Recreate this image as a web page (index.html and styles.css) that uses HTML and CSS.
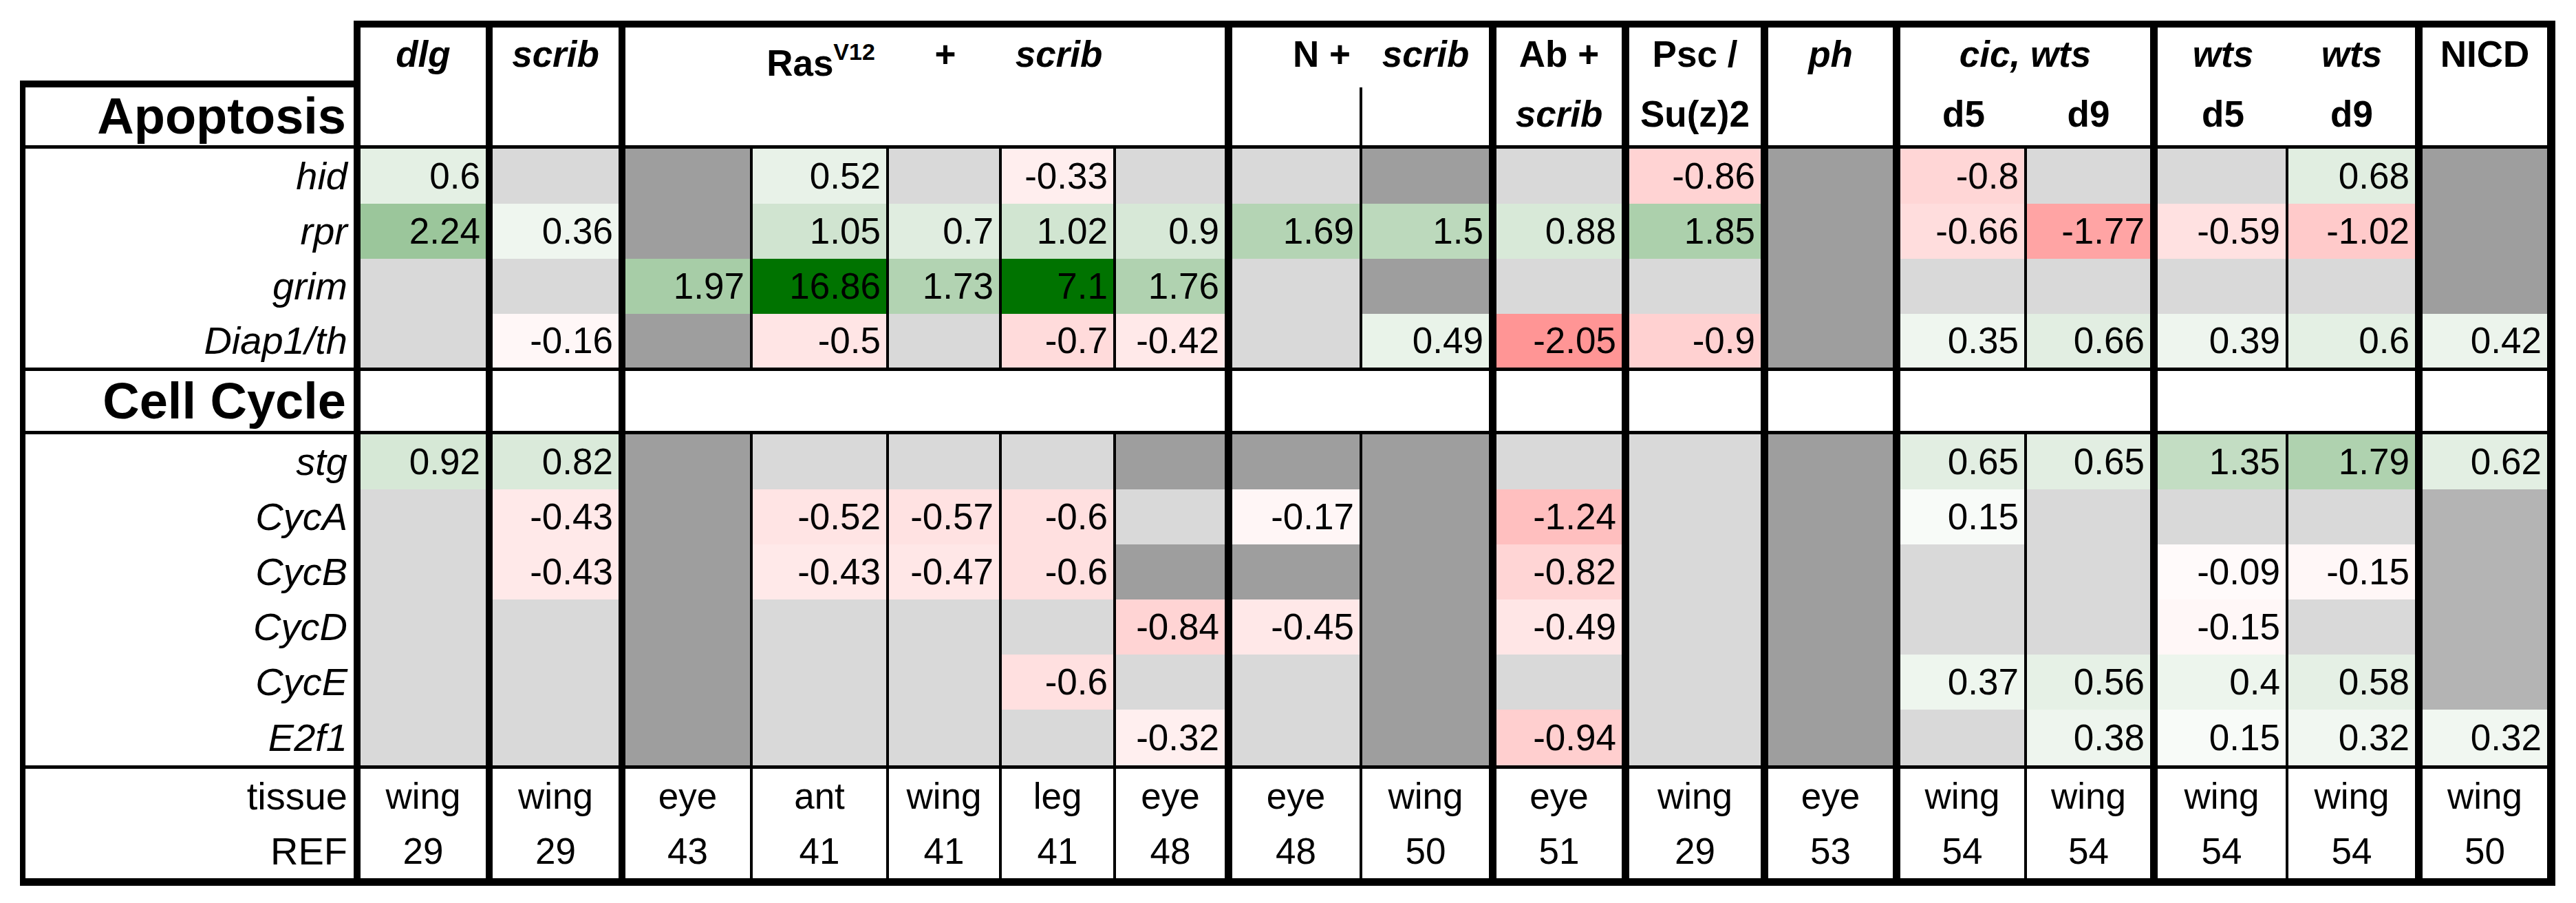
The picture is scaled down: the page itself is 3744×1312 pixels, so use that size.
FILE: index.html
```html
<!DOCTYPE html>
<html lang="en">
<head>
<meta charset="utf-8">
<title>Apoptosis and cell cycle gene expression</title>
<link rel="stylesheet" href="styles.css">
</head>
<body>
<table class="grid">
  <colgroup>
    <col class="c-label">
    <col class="c-dlg">
    <col class="c-scrib">
    <col class="c-r-eye">
    <col class="c-r-ant">
    <col class="c-r-wing">
    <col class="c-r-leg">
    <col class="c-r-eye2">
    <col class="c-n-eye">
    <col class="c-n-wing">
    <col class="c-ab">
    <col class="c-psc">
    <col class="c-ph">
    <col class="c-cic5">
    <col class="c-cic9">
    <col class="c-wts5">
    <col class="c-wts9">
    <col class="c-nicd">
  </colgroup>
  <thead>
    <tr class="h1">
      <th class="corner"></th>
      <th class="bi k10">dlg</th>
      <th class="bi k10">scrib</th>
      <th></th>
      <th class="ras">Ras<sup>V12</sup></th>
      <th>+</th>
      <th class="bi">scrib</th>
      <th class="k"></th>
      <th class="nplus">N +</th>
      <th class="bi k">scrib</th>
      <th class="k">Ab +</th>
      <th class="k">Psc /</th>
      <th class="bi k">ph</th>
      <th class="bi k" colspan="2">cic, wts</th>
      <th class="bi">wts</th>
      <th class="bi k">wts</th>
      <th class="out">NICD</th>
    </tr>
    <tr class="h2 sep">
      <th class="lab sect">Apoptosis</th>
      <th class="k10"></th>
      <th class="k10"></th>
      <th class="k" colspan="5"></th>
      <th class="n"></th>
      <th class="k"></th>
      <th class="bi k">scrib</th>
      <th class="k">Su(z)2</th>
      <th class="k"></th>
      <th>d5</th>
      <th class="k">d9</th>
      <th>d5</th>
      <th class="k">d9</th>
      <th class="out"></th>
    </tr>
  </thead>
  <tbody>
    <tr class="row">
      <th class="lab gene">hid</th>
      <td style="background:#e4f0e4">0.6</td>
      <td class="lg"></td>
      <td class="dg"></td>
      <td style="background:#e8f2e8">0.52</td>
      <td class="lg"></td>
      <td style="background:#ffeeee">-0.33</td>
      <td class="lg"></td>
      <td class="lg"></td>
      <td class="dg"></td>
      <td class="lg"></td>
      <td style="background:#ffd3d3">-0.86</td>
      <td class="dg"></td>
      <td style="background:#ffd6d6">-0.8</td>
      <td class="lg"></td>
      <td class="lg"></td>
      <td style="background:#e1eee1">0.68</td>
      <td class="dg"></td>
    </tr>
    <tr class="row">
      <th class="lab gene">rpr</th>
      <td style="background:#9bc69b">2.24</td>
      <td style="background:#eff6ef">0.36</td>
      <td class="dg"></td>
      <td style="background:#d0e4d0">1.05</td>
      <td style="background:#e0ede0">0.7</td>
      <td style="background:#d1e5d1">1.02</td>
      <td style="background:#d7e8d7">0.9</td>
      <td style="background:#b4d4b4">1.69</td>
      <td style="background:#bcd9bc">1.5</td>
      <td style="background:#d8e9d8">0.88</td>
      <td style="background:#acd0ac">1.85</td>
      <td class="dg"></td>
      <td style="background:#ffdddd">-0.66</td>
      <td style="background:#ffa4a4">-1.77</td>
      <td style="background:#ffe1e1">-0.59</td>
      <td style="background:#ffcaca">-1.02</td>
      <td class="dg"></td>
    </tr>
    <tr class="row">
      <th class="lab gene">grim</th>
      <td class="lg"></td>
      <td class="lg"></td>
      <td style="background:#a7cda7">1.97</td>
      <td style="background:#007300">16.86</td>
      <td style="background:#b2d3b2">1.73</td>
      <td style="background:#007300">7.1</td>
      <td style="background:#b0d2b0">1.76</td>
      <td class="lg"></td>
      <td class="dg"></td>
      <td class="lg"></td>
      <td class="lg"></td>
      <td class="dg"></td>
      <td class="lg"></td>
      <td class="lg"></td>
      <td class="lg"></td>
      <td class="lg"></td>
      <td class="dg"></td>
    </tr>
    <tr class="row sep diap">
      <th class="lab gene">Diap1/th</th>
      <td class="lg"></td>
      <td style="background:#fff7f7">-0.16</td>
      <td class="dg"></td>
      <td style="background:#ffe5e5">-0.5</td>
      <td class="lg"></td>
      <td style="background:#ffdbdb">-0.7</td>
      <td style="background:#ffe9e9">-0.42</td>
      <td class="lg"></td>
      <td style="background:#e9f3e9">0.49</td>
      <td style="background:#ff9595">-2.05</td>
      <td style="background:#ffd1d1">-0.9</td>
      <td class="dg"></td>
      <td style="background:#eff6ef">0.35</td>
      <td style="background:#e2eee2">0.66</td>
      <td style="background:#eef5ee">0.39</td>
      <td style="background:#e4f0e4">0.6</td>
      <td style="background:#ecf4ec">0.42</td>
    </tr>
    <tr class="cc sep">
      <th class="lab sect">Cell Cycle</th>
      <td class="k10"></td>
      <td class="k10"></td>
      <td class="k" colspan="5"></td>
      <td class="k" colspan="2"></td>
      <td class="k"></td>
      <td class="k"></td>
      <td class="k"></td>
      <td class="k" colspan="2"></td>
      <td class="k" colspan="2"></td>
      <td class="out"></td>
    </tr>
    <tr class="row">
      <th class="lab gene">stg</th>
      <td style="background:#d6e8d6">0.92</td>
      <td style="background:#daeada">0.82</td>
      <td class="dg"></td>
      <td class="lg"></td>
      <td class="lg"></td>
      <td class="lg"></td>
      <td class="dg"></td>
      <td class="dg"></td>
      <td class="dg"></td>
      <td class="lg"></td>
      <td class="lg"></td>
      <td class="dg"></td>
      <td style="background:#e2eee2">0.65</td>
      <td style="background:#e2eee2">0.65</td>
      <td style="background:#c3ddc3">1.35</td>
      <td style="background:#afd2af">1.79</td>
      <td style="background:#e3efe3">0.62</td>
    </tr>
    <tr class="row">
      <th class="lab gene">CycA</th>
      <td class="lg"></td>
      <td style="background:#ffe9e9">-0.43</td>
      <td class="dg"></td>
      <td style="background:#ffe4e4">-0.52</td>
      <td style="background:#ffe2e2">-0.57</td>
      <td style="background:#ffe0e0">-0.6</td>
      <td class="lg"></td>
      <td style="background:#fff6f6">-0.17</td>
      <td class="dg"></td>
      <td style="background:#ffbfbf">-1.24</td>
      <td class="lg"></td>
      <td class="dg"></td>
      <td style="background:#f8fbf8">0.15</td>
      <td class="lg"></td>
      <td class="lg"></td>
      <td class="lg"></td>
      <td class="mg"></td>
    </tr>
    <tr class="row">
      <th class="lab gene">CycB</th>
      <td class="lg"></td>
      <td style="background:#ffe9e9">-0.43</td>
      <td class="dg"></td>
      <td style="background:#ffe9e9">-0.43</td>
      <td style="background:#ffe7e7">-0.47</td>
      <td style="background:#ffe0e0">-0.6</td>
      <td class="dg"></td>
      <td class="dg"></td>
      <td class="dg"></td>
      <td style="background:#ffd5d5">-0.82</td>
      <td class="lg"></td>
      <td class="dg"></td>
      <td class="lg"></td>
      <td class="lg"></td>
      <td style="background:#fffafa">-0.09</td>
      <td style="background:#fff7f7">-0.15</td>
      <td class="mg"></td>
    </tr>
    <tr class="row">
      <th class="lab gene">CycD</th>
      <td class="lg"></td>
      <td class="lg"></td>
      <td class="dg"></td>
      <td class="lg"></td>
      <td class="lg"></td>
      <td class="lg"></td>
      <td style="background:#ffd4d4">-0.84</td>
      <td style="background:#ffe8e8">-0.45</td>
      <td class="dg"></td>
      <td style="background:#ffe6e6">-0.49</td>
      <td class="lg"></td>
      <td class="dg"></td>
      <td class="lg"></td>
      <td class="lg"></td>
      <td style="background:#fff7f7">-0.15</td>
      <td class="lg"></td>
      <td class="mg"></td>
    </tr>
    <tr class="row">
      <th class="lab gene">CycE</th>
      <td class="lg"></td>
      <td class="lg"></td>
      <td class="dg"></td>
      <td class="lg"></td>
      <td class="lg"></td>
      <td style="background:#ffe0e0">-0.6</td>
      <td class="lg"></td>
      <td class="lg"></td>
      <td class="dg"></td>
      <td class="lg"></td>
      <td class="lg"></td>
      <td class="dg"></td>
      <td style="background:#eef6ee">0.37</td>
      <td style="background:#e6f1e6">0.56</td>
      <td style="background:#edf5ed">0.4</td>
      <td style="background:#e5f0e5">0.58</td>
      <td class="mg"></td>
    </tr>
    <tr class="row sep e2f">
      <th class="lab gene">E2f1</th>
      <td class="lg"></td>
      <td class="lg"></td>
      <td class="dg"></td>
      <td class="lg"></td>
      <td class="lg"></td>
      <td class="lg"></td>
      <td style="background:#ffefef">-0.32</td>
      <td class="lg"></td>
      <td class="dg"></td>
      <td style="background:#ffcfcf">-0.94</td>
      <td class="lg"></td>
      <td class="dg"></td>
      <td class="lg"></td>
      <td style="background:#eef5ee">0.38</td>
      <td style="background:#f8fbf8">0.15</td>
      <td style="background:#f1f7f1">0.32</td>
      <td style="background:#f1f7f1">0.32</td>
    </tr>
    <tr class="row meta">
      <th class="lab">tissue</th>
      <td>wing</td>
      <td>wing</td>
      <td>eye</td>
      <td>ant</td>
      <td>wing</td>
      <td>leg</td>
      <td>eye</td>
      <td>eye</td>
      <td>wing</td>
      <td>eye</td>
      <td>wing</td>
      <td>eye</td>
      <td>wing</td>
      <td>wing</td>
      <td>wing</td>
      <td>wing</td>
      <td>wing</td>
    </tr>
    <tr class="row meta last">
      <th class="lab">REF</th>
      <td>29</td>
      <td>29</td>
      <td>43</td>
      <td>41</td>
      <td>41</td>
      <td>41</td>
      <td>48</td>
      <td>48</td>
      <td>50</td>
      <td>51</td>
      <td>29</td>
      <td>53</td>
      <td>54</td>
      <td>54</td>
      <td>54</td>
      <td>54</td>
      <td>50</td>
    </tr>
  </tbody>
</table>
</body>
</html>
```

FILE: styles.css
```css
html, body {
  margin: 0;
  padding: 0;
  background: #ffffff;
}

body {
  font-family: "Liberation Sans", Arial, Helvetica, sans-serif;
  color: #000000;
}

.grid {
  border-collapse: separate;
  border-spacing: 0;
  table-layout: fixed;
  width: 3685px;
  margin: 30px 0 0 29px;
}

.grid th,
.grid td {
  box-sizing: border-box;
  padding: 0 8px;
  font-size: 53px;
  line-height: 60px;
  font-weight: normal;
  font-style: normal;
  white-space: nowrap;
  vertical-align: middle;
  text-align: right;
}

/* column widths */
.c-label { width: 495px; }
.c-dlg { width: 192px; }
.c-scrib { width: 193px; }
.c-r-eye { width: 185px; }
.c-r-ant { width: 198px; }
.c-r-wing { width: 164px; }
.c-r-leg { width: 166px; }
.c-r-eye2 { width: 169px; }
.c-n-eye { width: 189px; }
.c-n-wing { width: 195px; }
.c-ab { width: 193px; }
.c-psc { width: 202px; }
.c-ph { width: 192px; }
.c-cic5 { width: 184px; }
.c-cic9 { width: 190px; }
.c-wts5 { width: 190px; }
.c-wts9 { width: 195px; }
.c-nicd { width: 193px; }

/* rule weights */
.k10 { border-right: 10px solid #000; }
.k { border-right: 11px solid #000; }
.n { border-right: 4px solid #000; }
.out { border-right: 12px solid #000; }

/* row heights */
.h1 { height: 97px; }
.h2 { height: 89px; }
.row { height: 80px; }
.row.diap { height: 83px; }
.cc { height: 92px; }
.row.e2f { height: 86px; }
.row.last { height: 90px; }

.sep > th,
.sep > td {
  border-bottom: 5px solid #000;
}

.last > th,
.last > td {
  border-bottom: 11px solid #000;
}

/* header block */
.h1 > th {
  border-top: 10px solid #000;
}

.h1 > th,
.h2 > th {
  vertical-align: top;
  padding-top: 9px;
  text-align: center;
  font-weight: bold;
}

.h1 > th.corner {
  border-top: 0;
  border-right: 10px solid #000;
  border-bottom: 10px solid #000;
}

.bi {
  font-style: italic;
}

.grid th.bi {
  font-style: italic;
}

.h1 > th.ras {
  padding-top: 22px;
}

.ras sup {
  font-size: 34px;
  line-height: 0;
  vertical-align: 23px;
}

.h1 > th.nplus {
  text-align: right;
  padding-right: 17px;
}

/* label column */
.grid th.lab {
  border-left: 8px solid #000;
  border-right: 10px solid #000;
  text-align: right;
  padding-right: 9px;
  vertical-align: middle;
  font-size: 56px;
}

.grid th.gene {
  font-style: italic;
}

.grid th.sect {
  font-size: 74px;
  font-weight: bold;
  padding-top: 0;
  padding-right: 11px;
  vertical-align: middle;
}

/* full-width rows: rules by column */
.row > :nth-child(2),
.row > :nth-child(3) {
  border-right: 10px solid #000;
}

.row > :nth-child(4),
.row > :nth-child(5),
.row > :nth-child(6),
.row > :nth-child(7),
.row > :nth-child(9),
.row > :nth-child(14),
.row > :nth-child(16) {
  border-right: 4px solid #000;
}

.row > :nth-child(8),
.row > :nth-child(10),
.row > :nth-child(11),
.row > :nth-child(12),
.row > :nth-child(13),
.row > :nth-child(15),
.row > :nth-child(17) {
  border-right: 11px solid #000;
}

.row > :nth-child(18) {
  border-right: 12px solid #000;
}

/* cell fills */
.lg { background: #d9d9d9; }
.dg { background: #9e9e9e; }
.mg { background: #b4b4b4; }

.meta > td {
  text-align: center;
}
```
